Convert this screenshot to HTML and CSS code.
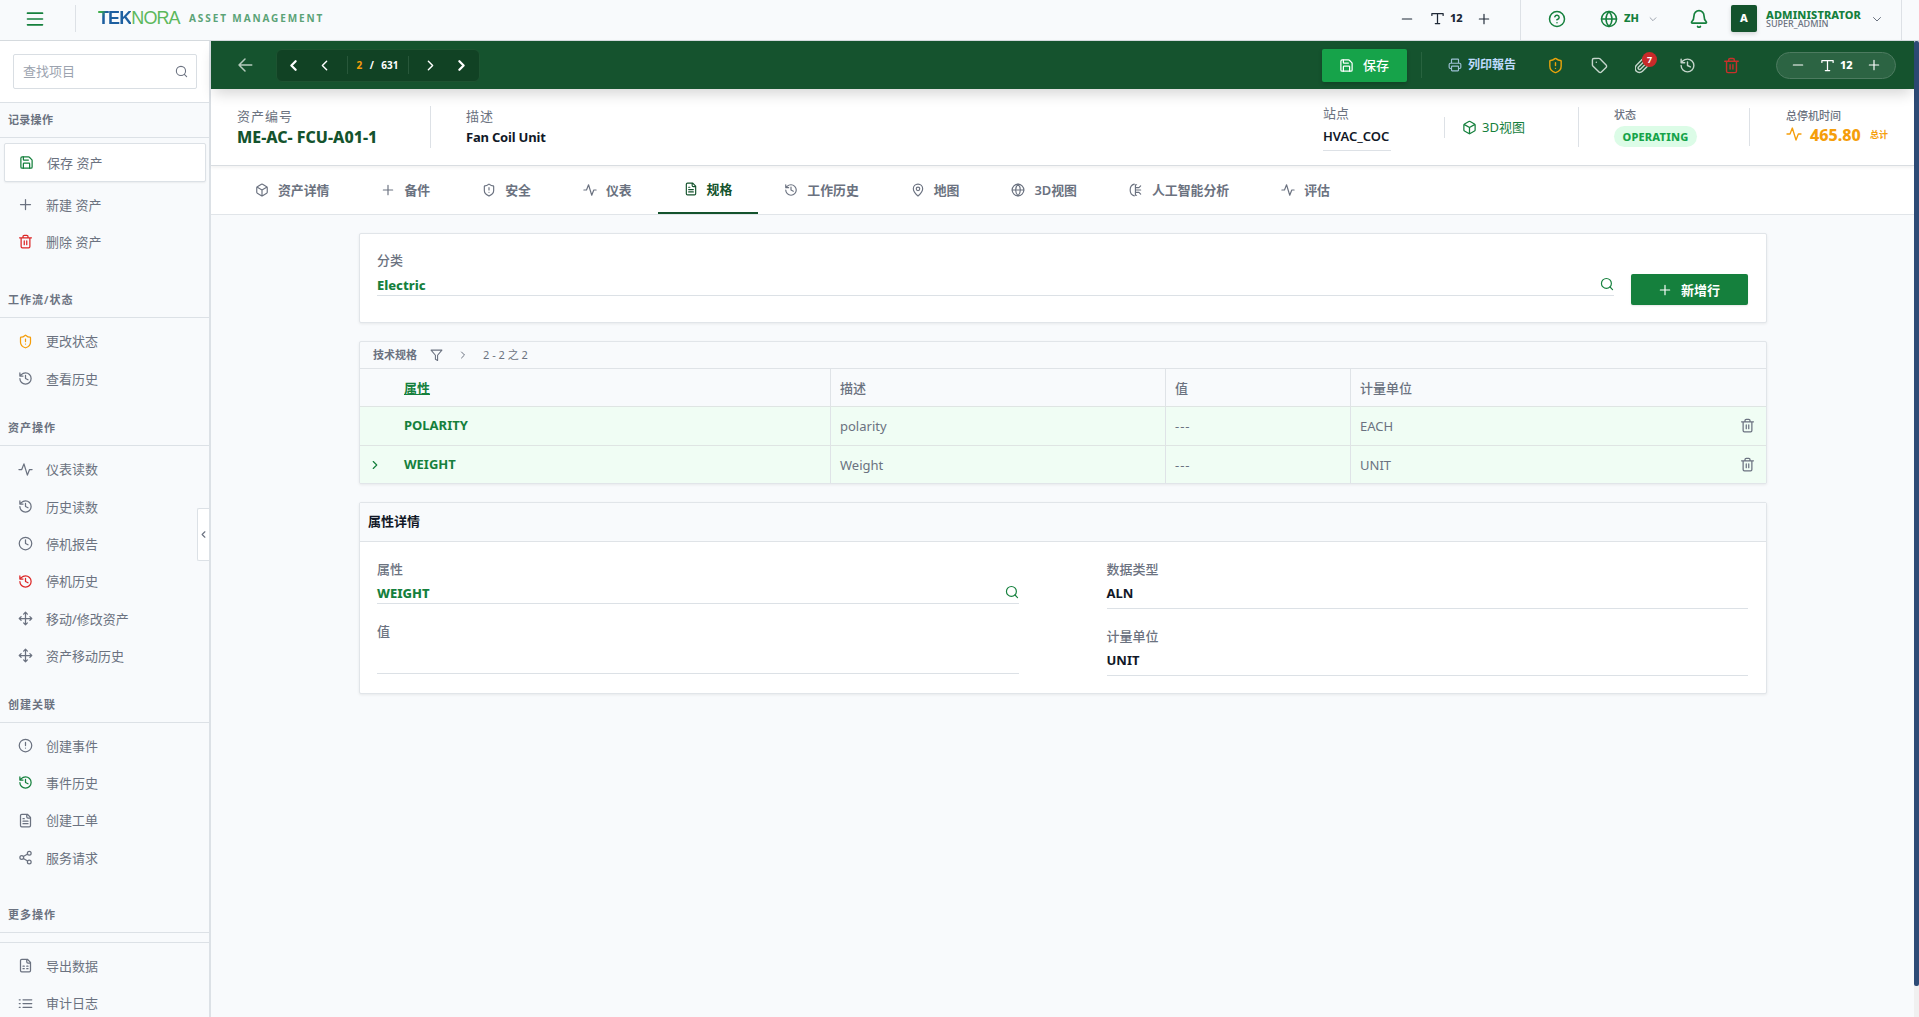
FILE: index.html
```html
<!DOCTYPE html>
<html lang="zh">
<head>
	<meta charset="utf-8">
	<title>Asset Management</title>
	<link rel="stylesheet" href="styles.css">
</head>
<body>
<svg class="defs" xmlns="http://www.w3.org/2000/svg">
	<symbol id="i-save" viewBox="0 0 24 24"><path d="M15.2 3a2 2 0 0 1 1.4.6l3.8 3.8a2 2 0 0 1 .6 1.4V19a2 2 0 0 1-2 2H5a2 2 0 0 1-2-2V5a2 2 0 0 1 2-2z"/><path d="M17 21v-7a1 1 0 0 0-1-1H8a1 1 0 0 0-1 1v7M7 3v4a1 1 0 0 0 1 1h7"/></symbol>
	<symbol id="i-plus" viewBox="0 0 24 24"><path d="M4 12h16M12 4v16"/></symbol>
	<symbol id="i-minus" viewBox="0 0 24 24"><path d="M4 12h16"/></symbol>
	<symbol id="i-trash" viewBox="0 0 24 24"><path d="M2.5 6h19M19 6v14a2 2 0 0 1-2 2H7a2 2 0 0 1-2-2V6M8 6V4a2 2 0 0 1 2-2h4a2 2 0 0 1 2 2v2M10 11v6M14 11v6"/></symbol>
	<symbol id="i-shield" viewBox="0 0 24 24"><path d="M20 13c0 5-3.5 7.5-7.7 9a1 1 0 0 1-.6 0C7.500 20.500 4 18 4 13V6a1 1 0 0 1 1-1c2 0 4.500-1.200 6.200-2.700a1.200 1.200 0 0 1 1.600 0C14.500 3.800 17 5 19 5a1 1 0 0 1 1 1zM12 8v4M12 16h.01"/></symbol>
	<symbol id="i-history" viewBox="0 0 24 24"><path d="M3 12a9 9 0 1 0 9-9 9.750 9.750 0 0 0-6.740 2.740L3 8M3 3v5h5M12 7v5l4 2"/></symbol>
	<symbol id="i-pulse" viewBox="0 0 24 24"><path d="M1.500 12H6l3.500-9L15 21l3.500-9h4"/></symbol>
	<symbol id="i-clock" viewBox="0 0 24 24"><circle cx="12" cy="12" r="10"/><path d="M12 6v6l4 2"/></symbol>
	<symbol id="i-move" viewBox="0 0 24 24"><path d="M12 2v20M2 12h20M15 19l-3 3-3-3M19 9l3 3-3 3M5 9l-3 3 3 3M9 5l3-3 3 3"/></symbol>
	<symbol id="i-alert" viewBox="0 0 24 24"><circle cx="12" cy="12" r="10"/><path d="M12 7v5M12 16h.01"/></symbol>
	<symbol id="i-file" viewBox="0 0 24 24"><path d="M15 2H6a2 2 0 0 0-2 2v16a2 2 0 0 0 2 2h12a2 2 0 0 0 2-2V7zM14 2v4a2 2 0 0 0 2 2h4M10 9H8M16 13H8M16 17H8"/></symbol>
	<symbol id="i-sheet" viewBox="0 0 24 24"><path d="M15 2H6a2 2 0 0 0-2 2v16a2 2 0 0 0 2 2h12a2 2 0 0 0 2-2V7zM14 2v4a2 2 0 0 0 2 2h4M8 13h2M14 13h2M8 17h2M14 17h2"/></symbol>
	<symbol id="i-share" viewBox="0 0 24 24"><circle cx="18" cy="5" r="3"/><circle cx="6" cy="12" r="3"/><circle cx="18" cy="19" r="3"/><path d="M8.600 13.500l6.800 4M15.400 6.500l-6.800 4"/></symbol>
	<symbol id="i-list" viewBox="0 0 24 24"><path d="M8 6h14M8 12h14M8 18h14M2 6h1.500M2 12h1.500M2 18h1.500"/></symbol>
	<symbol id="i-search" viewBox="0 0 24 24"><circle cx="11" cy="11" r="8.500"/><path d="M21.500 21.500l-4.300-4.300"/></symbol>
	<symbol id="i-menu" viewBox="0 0 24 24"><path d="M3 5h18M3 12h18M3 19h18"/></symbol>
	<symbol id="i-left" viewBox="0 0 24 24"><path d="M15 18l-6-6 6-6"/></symbol>
	<symbol id="i-right" viewBox="0 0 24 24"><path d="M9 18l6-6-6-6"/></symbol>
	<symbol id="i-down" viewBox="0 0 24 24"><path d="M5 9l7 7 7-7"/></symbol>
	<symbol id="i-back" viewBox="0 0 24 24"><path d="M12 20l-8-8 8-8M21 12H4"/></symbol>
	<symbol id="i-type" viewBox="0 0 24 24"><path d="M3 7V4h18v3M12 4v16M8.500 20h7"/></symbol>
	<symbol id="i-help" viewBox="0 0 24 24"><circle cx="12" cy="12" r="10"/><path d="M9.100 9a3 3 0 0 1 5.800 1c0 2-3 3-3 3M12 17h.01"/></symbol>
	<symbol id="i-globe" viewBox="0 0 24 24"><circle cx="12" cy="12" r="10"/><path d="M12 2a14.500 14.500 0 0 0 0 20 14.500 14.500 0 0 0 0-20M2 12h20"/></symbol>
	<symbol id="i-bell" viewBox="0 0 24 24"><path d="M10.300 21a2 2 0 0 0 3.400 0M3.300 15.300A1 1 0 0 0 4 17h16a1 1 0 0 0 .7-1.700C19.400 14 18 12.500 18 8A6 6 0 0 0 6 8c0 4.500-1.400 6-2.700 7.300z"/></symbol>
	<symbol id="i-print" viewBox="0 0 24 24"><path d="M6 18H4a2 2 0 0 1-2-2v-5a2 2 0 0 1 2-2h16a2 2 0 0 1 2 2v5a2 2 0 0 1-2 2h-2M6 9V3a1 1 0 0 1 1-1h10a1 1 0 0 1 1 1v6"/><rect x="6" y="14" width="12" height="8" rx="1"/></symbol>
	<symbol id="i-tag" viewBox="0 0 24 24"><path d="M12.600 2.600A2 2 0 0 0 11.200 2H4a2 2 0 0 0-2 2v7.200a2 2 0 0 0 .6 1.400l8.700 8.700a2.400 2.400 0 0 0 3.400 0l6.600-6.600a2.400 2.400 0 0 0 0-3.400zM7.500 7.500h.01"/></symbol>
	<symbol id="i-clip" viewBox="0 0 24 24"><path d="M13.200 6l-8.400 8.400a2 2 0 0 0 2.800 2.800L16 8.800a4 4 0 1 0-5.700-5.600l-8.300 8.500a6 6 0 1 0 8.500 8.500l8.400-8.500"/></symbol>
	<symbol id="i-cube" viewBox="0 0 24 24"><path d="M21 8a2 2 0 0 0-1-1.700l-7-4a2 2 0 0 0-2 0l-7 4A2 2 0 0 0 3 8v8a2 2 0 0 0 1 1.700l7 4a2 2 0 0 0 2 0l7-4a2 2 0 0 0 1-1.700zM3.300 7l8.700 5 8.700-5M12 22V12"/></symbol>
	<symbol id="i-pin" viewBox="0 0 24 24"><path d="M20 10c0 5-5.500 10.200-7.400 11.800a1 1 0 0 1-1.200 0C9.500 20.200 4 15 4 10a8 8 0 0 1 16 0z"/><circle cx="12" cy="10" r="3"/></symbol>
	<symbol id="i-brain" viewBox="0 0 24 24"><path d="M9 2C5 3 2 7 2 12s3 9 7 10M13 3h-2v18h2M11 8h6l3-3M11 12h9M11 16h6l3 3"/></symbol>
	<symbol id="i-filter" viewBox="0 0 24 24"><path d="M22 3H2l8 9.500V20l4 2v-9.500z"/></symbol>
</svg>

<header class="topbar">
	<svg class="icon menu"><use href="#i-menu"/></svg>
	<div class="brand">
		<span class="logo"><b>TEK</b><i>NORA</i></span>
		<span class="product">ASSET MANAGEMENT</span>
	</div>
	<div class="font-size">
		<svg class="icon"><use href="#i-minus"/></svg>
		<svg class="icon"><use href="#i-type"/></svg>
		<b>12</b>
		<svg class="icon"><use href="#i-plus"/></svg>
	</div>
	<div class="user-tools">
		<svg class="icon help"><use href="#i-help"/></svg>
		<svg class="icon globe"><use href="#i-globe"/></svg>
		<b class="lang">ZH</b>
		<svg class="icon caret"><use href="#i-down"/></svg>
		<svg class="icon bell"><use href="#i-bell"/></svg>
		<span class="avatar">A</span>
		<div class="user"><b>ADMINISTRATOR</b><span>SUPER_ADMIN</span></div>
		<svg class="icon user-caret"><use href="#i-down"/></svg>
	</div>
</header>

<div class="layout">
	<aside class="sidebar">
		<div class="search-wrap">
			<div class="search"><span>查找项目</span><svg class="icon"><use href="#i-search"/></svg></div>
		</div>
		<h3 class="first">记录操作</h3>
		<ul class="record">
			<li class="active"><svg class="icon green"><use href="#i-save"/></svg>保存 资产</li>
			<li><svg class="icon"><use href="#i-plus"/></svg>新建 资产</li>
			<li><svg class="icon red"><use href="#i-trash"/></svg>删除 资产</li>
		</ul>
		<h3>工作流/状态</h3>
		<ul>
			<li><svg class="icon orange"><use href="#i-shield"/></svg>更改状态</li>
			<li><svg class="icon"><use href="#i-history"/></svg>查看历史</li>
		</ul>
		<h3>资产操作</h3>
		<ul>
			<li><svg class="icon"><use href="#i-pulse"/></svg>仪表读数</li>
			<li><svg class="icon"><use href="#i-history"/></svg>历史读数</li>
			<li><svg class="icon"><use href="#i-clock"/></svg>停机报告</li>
			<li><svg class="icon red"><use href="#i-history"/></svg>停机历史</li>
			<li><svg class="icon"><use href="#i-move"/></svg>移动/修改资产</li>
			<li><svg class="icon"><use href="#i-move"/></svg>资产移动历史</li>
		</ul>
		<h3>创建关联</h3>
		<ul class="related">
			<li><svg class="icon"><use href="#i-alert"/></svg>创建事件</li>
			<li><svg class="icon green"><use href="#i-history"/></svg>事件历史</li>
			<li><svg class="icon"><use href="#i-file"/></svg>创建工单</li>
			<li><svg class="icon"><use href="#i-share"/></svg>服务请求</li>
		</ul>
		<h3>更多操作</h3>
		<ul class="more">
			<li><svg class="icon"><use href="#i-sheet"/></svg>导出数据</li>
			<li><svg class="icon"><use href="#i-list"/></svg>审计日志</li>
		</ul>
		<span class="collapse"><svg class="icon"><use href="#i-left"/></svg></span>
	</aside>

	<main class="main">
		<div class="actionbar">
			<svg class="icon back"><use href="#i-back"/></svg>
			<div class="pager">
				<svg class="icon bold"><use href="#i-left"/></svg>
				<svg class="icon"><use href="#i-left"/></svg>
				<div class="count"><em>2</em><span>/</span><span>631</span></div>
				<svg class="icon"><use href="#i-right"/></svg>
				<svg class="icon bold"><use href="#i-right"/></svg>
			</div>
			<button class="save"><svg class="icon"><use href="#i-save"/></svg>保存</button>
			<div class="print"><svg class="icon"><use href="#i-print"/></svg>列印報告</div>
			<div class="tools">
				<svg class="icon orange"><use href="#i-shield"/></svg>
				<svg class="icon"><use href="#i-tag"/></svg>
				<span class="attach"><svg class="icon"><use href="#i-clip"/></svg><b>7</b></span>
				<svg class="icon"><use href="#i-history"/></svg>
				<svg class="icon red"><use href="#i-trash"/></svg>
			</div>
			<div class="font-size light">
				<svg class="icon"><use href="#i-minus"/></svg>
				<svg class="icon"><use href="#i-type"/></svg>
				<b>12</b>
				<svg class="icon"><use href="#i-plus"/></svg>
			</div>
		</div>

		<section class="summary">
			<div class="asset-no"><label>资产编号</label><strong>ME-AC- FCU-A01-1</strong></div>
			<div class="asset-desc"><label>描述</label><strong>Fan Coil Unit</strong></div>
			<div class="site"><label>站点</label><strong>HVAC_COC</strong></div>
			<div class="view3d"><svg class="icon"><use href="#i-cube"/></svg>3D视图</div>
			<div class="status"><label>状态</label><span class="pill">OPERATING</span></div>
			<div class="downtime">
				<label>总停机时间</label>
				<div class="total"><svg class="icon"><use href="#i-pulse"/></svg><b>465.80</b><small>总计</small></div>
			</div>
		</section>

		<nav class="tabs">
			<a><svg class="icon"><use href="#i-cube"/></svg>资产详情</a>
			<a><svg class="icon"><use href="#i-plus"/></svg>备件</a>
			<a><svg class="icon"><use href="#i-shield"/></svg>安全</a>
			<a><svg class="icon"><use href="#i-pulse"/></svg>仪表</a>
			<a class="active"><svg class="icon"><use href="#i-file"/></svg>规格</a>
			<a><svg class="icon"><use href="#i-history"/></svg>工作历史</a>
			<a><svg class="icon"><use href="#i-pin"/></svg>地图</a>
			<a><svg class="icon"><use href="#i-globe"/></svg>3D视图</a>
			<a><svg class="icon"><use href="#i-brain"/></svg>人工智能分析</a>
			<a><svg class="icon"><use href="#i-pulse"/></svg>评估</a>
		</nav>

		<div class="content">
			<section class="card classify">
				<div class="field lookup">
					<label>分类</label>
					<div class="value"><strong>Electric</strong><svg class="icon"><use href="#i-search"/></svg></div>
				</div>
				<button class="add"><svg class="icon"><use href="#i-plus"/></svg>新增行</button>
			</section>

			<section class="card specs">
				<div class="specs-head">
					<b>技术规格</b>
					<svg class="icon filter"><use href="#i-filter"/></svg>
					<svg class="icon next"><use href="#i-right"/></svg>
					<span>2 - 2 之 2</span>
				</div>
				<div class="row head"><span></span><u>属性</u><span class="cell">描述</span><span class="cell">值</span><span class="cell">计量单位</span></div>
				<div class="row">
					<span></span><strong>POLARITY</strong><span class="cell">polarity</span><span class="cell none">---</span>
					<span class="cell last">EACH<svg class="icon"><use href="#i-trash"/></svg></span>
				</div>
				<div class="row">
					<span class="expand"><svg class="icon"><use href="#i-right"/></svg></span><strong>WEIGHT</strong><span class="cell">Weight</span><span class="cell none">---</span>
					<span class="cell last">UNIT<svg class="icon"><use href="#i-trash"/></svg></span>
				</div>
			</section>

			<section class="card detail">
				<h2>属性详情</h2>
				<div class="detail-body">
					<div class="col">
						<div class="field lookup">
							<label>属性</label>
							<div class="value"><strong>WEIGHT</strong><svg class="icon"><use href="#i-search"/></svg></div>
						</div>
						<div class="field empty"><label>值</label><div class="value"></div></div>
					</div>
					<div class="col">
						<div class="field"><label>数据类型</label><div class="value">ALN</div></div>
						<div class="field"><label>计量单位</label><div class="value">UNIT</div></div>
					</div>
				</div>
			</section>
		</div>
	</main>
	<div class="scroll"><span></span></div>
</div>
</body>
</html>
```
FILE: styles.css
```css
*{
	margin: 0;
	padding: 0;
	box-sizing: border-box;
}
body{
	height: 1017px;
	overflow: hidden;
	background: #f8fafc;
	color: #6b7280;
	font-family: "Noto Sans", "Noto Sans CJK SC", sans-serif;
	font-size: 13px;
	line-height: 18px;
}
.defs{
	position: absolute;
	width: 0;
	height: 0;
}
.icon{
	width: 14px;
	height: 14px;
	flex: none;
	display: block;
	fill: none;
	stroke: currentColor;
	stroke-width: 2;
	stroke-linecap: round;
	stroke-linejoin: round;
}
.green{ color: #15803d; }
.red{ color: #dc2626; }
.orange{ color: #f59e0b; }
button{
	border: 0;
	border-radius: 2px;
	font: inherit;
	font-weight: 700;
	color: #fff;
	display: flex;
	align-items: center;
}

/* 顶部栏 */
.topbar{
	height: 41px;
	padding-bottom: 3px;
	display: flex;
	align-items: center;
	border-bottom: 1px solid #d5dade;
}
.menu{
	width: 20px;
	height: 20px;
	margin-left: 25px;
	color: #15803d;
}
.brand{
	height: 27px;
	margin-left: 30px;
	padding-left: 22px;
	border-left: 1px solid #dde1e6;
	display: flex;
	align-items: center;
	flex: 1;
}
.logo{
	width: 82px;
	margin: -2px 9px 0 0;
	font-family: "Liberation Sans", sans-serif;
	font-size: 18px;
	letter-spacing: -.9px;
	color: #5cb85c;
}
.logo b{
	background: linear-gradient(125deg, #3fae49 12%, #1d5fa0 24%);
	-webkit-background-clip: text;
	color: transparent;
}
.logo i{ font-style: normal; }
.product{
	margin-top: -1px;
	font-size: 10px;
	font-weight: 700;
	letter-spacing: 1.900px;
	color: #5ba377;
}
.font-size{
	width: 120px;
	display: flex;
	align-items: center;
	color: #1f2937;
}
.font-size b{
	width: 12px;
	margin: -1px 0 0 5px;
	font-size: 11px;
	font-weight: 800;
}
.font-size .icon:nth-child(2){
	width: 15px;
	height: 15px;
	margin-left: 16px;
}
.font-size .icon:last-child{ margin-left: 15px; }
.user-tools{
	align-self: stretch;
	width: 382px;
	margin: 0 17px -3px 0;
	padding: 0 0 3px 27px;
	border-left: 1px solid #dde1e6;
	border-right: 1px solid #dde1e6;
	display: flex;
	align-items: center;
	color: #15803d;
}
.help, .globe, .bell{
	width: 18px;
	height: 18px;
}
.globe{ margin-left: 34px; }
.lang{
	width: 18px;
	margin: -1px 0 0 6px;
	font-size: 11px;
	font-weight: 800;
}
.caret{
	width: 10px;
	height: 10px;
	margin-left: 6px;
	color: #8b929e;
}
.bell{
	width: 20px;
	height: 20px;
	margin-left: 31px;
}
.avatar{
	width: 26px;
	height: 27px;
	margin-left: 22px;
	border-radius: 2px;
	background: #14532d;
	color: #fff;
	font-size: 11px;
	font-weight: 800;
	line-height: 26px;
	text-align: center;
	box-shadow: 0 2px 4px rgba(0,0,0,.15);
}
.user{
	width: 98px;
	margin-left: 9px;
	font-size: 11px;
	line-height: 9px;
}
.user b{
	display: block;
	font-weight: 800;
	letter-spacing: .1px;
}
.user span{
	display: block;
	font-size: 9px;
	font-weight: 500;
	color: #6b7280;
}
.user-caret{
	width: 12px;
	height: 12px;
	margin-left: 7px;
	color: #6b7280;
}

.layout{
	height: 976px;
	display: flex;
}

/* 左侧菜单 */
.sidebar{
	position: relative;
	width: 211px;
	border-right: 2px solid #dce1e6;
	flex: none;
	overflow: hidden;
}
.search-wrap{
	height: 61px;
	padding: 13px 12px 0 13px;
	background: #fff;
}
.search{
	height: 35px;
	padding: 0 8px 1px 9px;
	border: 1px solid #d9dee3;
	border-radius: 2px;
	display: flex;
	align-items: center;
	justify-content: space-between;
	color: #9ca3af;
}
.search .icon{
	width: 13px;
	height: 13px;
	color: #6b7280;
}
.sidebar h3{
	height: 35px;
	padding-left: 8px;
	border-bottom: 1px solid #dce1e6;
	font-size: 11px;
	font-weight: 600;
	letter-spacing: 1px;
	line-height: 34px;
}
.sidebar h3.first{
	height: 36px;
	border-top: 1px solid #dce1e6;
	letter-spacing: .3px;
}
.sidebar ul{
	padding: 5px 4px 13.500px;
	list-style: none;
}
.sidebar li{
	height: 37.300px;
	padding-left: 14px;
	display: flex;
	align-items: center;
	gap: 13px;
}
.sidebar li .icon{ width: 15px; height: 15px; }
.sidebar ul.record{ padding-bottom: 22px; }
.sidebar .record li.active{
	width: 202px;
	height: 39px;
	margin-bottom: 4px;
	border: 1px solid #dce1e6;
	border-radius: 2px;
	background: #fff;
	box-shadow: 0 1px 2px rgba(0,0,0,.06);
}
.sidebar ul.related{
	padding-top: 4px;
	padding-bottom: 22px;
}
.sidebar ul.more{
	margin-top: 9px;
	padding-top: 4px;
	border-top: 1px solid #dce1e6;
}
.collapse{
	position: absolute;
	top: 467px;
	right: 0;
	width: 12px;
	height: 53px;
	border: 1px solid #dce1e6;
	border-right: 0;
	border-radius: 2px 0 0 2px;
	background: #fff;
	display: flex;
	align-items: center;
}
.collapse .icon{ width: 11px; height: 11px; stroke-width: 2.500; }

/* 深绿操作栏 */
.main{
	flex: 1;
}
.actionbar{
	position: relative;
	z-index: 1;
	height: 48px;
	padding: 0 18px 0 25px;
	background: #15532e;
	box-shadow: 0 8px 14px -3px rgba(0,0,0,.16);
	display: flex;
	align-items: center;
}
.back{
	width: 18px;
	height: 18px;
	color: #b5cbbd;
}
.pager{
	width: 204px;
	height: 33px;
	margin: 0 auto 0 22px;
	padding: 0 9px 0 8px;
	border: 1px solid #1d5331;
	border-radius: 6px;
	background: #114224;
	color: #fff;
	display: flex;
	align-items: center;
	justify-content: space-between;
}
.pager .icon{ width: 17px; height: 17px; }
.pager .bold{ stroke-width: 3.200; }
.count{
	width: 62px;
	padding: 0 9px;
	border-left: 1px solid #28573a;
	border-right: 1px solid #28573a;
	display: flex;
	justify-content: space-between;
	font-size: 10px;
	font-weight: 700;
}
.count em{
	font-style: normal;
	color: #f59e0b;
}
.save{
	width: 85px;
	height: 33px;
	padding-left: 17px;
	gap: 9px;
	background: #16a34a;
	box-shadow: 0 2px 4px rgba(0,0,0,.2);
	font-weight: 500;
}
.save .icon{ width: 15px; height: 15px; }
.print{
	width: 122px;
	height: 26px;
	margin-left: 14px;
	padding-left: 26px;
	border-left: 1px solid #28633f;
	display: flex;
	align-items: center;
	gap: 6px;
	font-size: 12px;
	font-weight: 700;
	color: #bfdbfe;
}
.print .icon{ opacity: .8; }
.tools{
	width: 193px;
	margin: 0 36px 0 4px;
	display: flex;
	justify-content: space-between;
	color: #c5d5cb;
}
.tools .icon{ width: 17px; height: 17px; }
.tools .orange{ color: #e9a30c; }
.tools .red{ color: #c9302a; }
.attach{ position: relative; }
.attach b{
	position: absolute;
	top: -5px;
	right: -5px;
	width: 15px;
	height: 15px;
	border-radius: 50%;
	background: #c92a2a;
	color: #fff;
	font-size: 9px;
	line-height: 15px;
	text-align: center;
}
.font-size.light{
	height: 27px;
	padding-left: 14px;
	border: 1px solid #4d7b60;
	border-radius: 14px;
	background: #2c6443;
	color: #fff;
}
.font-size.light .icon:nth-child(2){ margin-left: 15px; }

/* 资产摘要 */
.summary{
	height: 77px;
	padding-left: 26px;
	border-bottom: 1px solid #d9dde1;
	background: #fff;
	display: flex;
	align-items: center;
	box-shadow: 0 2px 3px rgba(0,0,0,.05);
	position: relative;
}
.summary label, .summary strong{ display: block; }
.asset-no{
	width: 194px;
	height: 42px;
	border-right: 1px solid #dde1e6;
}
.asset-no label, .asset-desc label{ letter-spacing: 1px; line-height: 20px; }
.asset-no strong{
	font-size: 16px;
	font-weight: 800;
	line-height: 23px;
	color: #14532d;
}
.asset-desc{
	height: 42px;
	margin: 0 auto 0 35px;
}
.asset-desc strong{
	letter-spacing: -.2px;
	line-height: 22px;
	color: #111827;
}
.site{
	width: 68px;
	margin-right: 53px;
}
.site strong{
	margin-top: 4px;
	padding: 1px 0 5px;
	border-bottom: 1px solid #dde1e6;
	font-weight: 600;
	color: #111827;
}
.view3d{
	width: 134px;
	height: 21px;
	padding-left: 17px;
	border-left: 1px solid #dde1e6;
	display: flex;
	align-items: center;
	gap: 5px;
	color: #15803d;
}
.view3d .icon{ width: 15px; height: 15px; }
.status{
	width: 171px;
	height: 40px;
	padding-left: 35px;
	border-left: 1px solid #dde1e6;
	font-size: 11px;
	font-weight: 500;
}
.status label{
	margin-bottom: 4px;
	line-height: 15px;
}
.pill{
	display: block;
	width: 83px;
	border-radius: 11px;
	background: #dcfce7;
	color: #16a34a;
	font-weight: 800;
	letter-spacing: .2px;
	line-height: 21px;
	text-align: center;
}
.downtime{
	width: 165px;
	height: 38px;
	padding-left: 36px;
	border-left: 1px solid #dde1e6;
	font-size: 11px;
	font-weight: 500;
}
.downtime label{ line-height: 16px; }
.total{
	padding-top: 2px;
	display: flex;
	align-items: center;
	color: #f59e0b;
}
.total .icon{ width: 16px; height: 16px; margin-top: -2px; }
.total b{
	width: 60px;
	margin-left: 8px;
	font-size: 16px;
	font-weight: 800;
}
.total small{ font-size: 9px; font-weight: 600; }

/* 页签 */
.tabs{
	height: 49px;
	padding-left: 18px;
	border-bottom: 1px solid #e1e5e9;
	background: #fff;
	display: flex;
}
.tabs a{
	padding: 0 26px;
	display: flex;
	align-items: center;
	gap: 9px;
	font-size: 12.870px;
	font-weight: 600;
}
.tabs .active{
	height: 48px;
	border-bottom: 2px solid #14532d;
	color: #14532d;
}

/* 内容 */
.content{
	width: 1408px;
	margin: 18px 0 0 148px;
	display: flex;
	flex-direction: column;
	gap: 18px;
}
.card{
	border: 1px solid #e1e5e9;
	border-radius: 2px;
	background: #fff;
	box-shadow: 0 1px 3px rgba(0,0,0,.07);
}
.classify{
	height: 90px;
	padding: 17px 18px 0 17px;
	display: flex;
	gap: 17px;
}
.field label{
	display: block;
	line-height: 18px;
	font-weight: 500;
}
.field .value{
	height: 31px;
	border-bottom: 1px solid #dce1e6;
	color: #111827;
	font-weight: 700;
	line-height: 31px;
}
.classify .field{ flex: 1; }
.field.lookup .value{
	height: 26px;
	padding-top: 4px;
	display: flex;
	align-items: center;
	justify-content: space-between;
	line-height: 18px;
	color: #15803d;
}
.lookup strong{ font-weight: 800; }
.lookup .icon{ margin-top: -2px; }
.classify .field.lookup .value{
	height: 27px;
	padding-top: 5px;
}
.add{
	width: 117px;
	height: 31px;
	margin-top: 23px;
	padding-left: 27px;
	gap: 9px;
	background: #15803d;
	box-shadow: 0 1px 2px rgba(0,0,0,.1);
}
.specs{
	height: 143px;
	background: #f8fafc;
	overflow: hidden;
}
.specs-head{
	height: 27px;
	padding-left: 13px;
	border-bottom: 1px solid #dfe3e7;
	display: flex;
	align-items: center;
	font-size: 11px;
}
.filter{ margin-left: 13px; width: 13px; }
.next{ width: 12px; height: 12px; }
.specs-head .next{ margin: 0 14px; }
.row{
	height: 37px;
	display: grid;
	grid-template-columns: 44px 426px 335px 185px 1fr;
	align-items: center;
	background: #f0fdf4;
	color: #6b7280;
}
.row + .row{ border-top: 1px solid #dfe5e3; height: 39px; }
.row.head{
	background: none;
	font-weight: 500;
}
.row u, .row strong{ color: #15803d; font-weight: 700; }
.row strong{ margin-top: -2px; }
.cell{
	height: 100%;
	padding-left: 9px;
	border-left: 1px solid #dfe3e7;
	display: flex;
	align-items: center;
}
.cell.none{ letter-spacing: 1px; }
.last{
	justify-content: space-between;
	padding-right: 11px;
}
.last .icon{ width: 15px; height: 15px; margin-top: -2px; }
.expand{ padding-left: 8px; color: #15803d; }
.detail{ height: 192px; }
.detail h2{
	height: 39px;
	padding-left: 8px;
	border-bottom: 1px solid #dfe3e7;
	background: #f8fafc;
	font-size: 13px;
	line-height: 37px;
	color: #111827;
}
.detail-body{
	padding: 18px 18px 0 17px;
	display: flex;
	gap: 88px;
}
.col{
	flex: 1;
	display: flex;
	flex-direction: column;
	gap: 18px;
}
.detail .empty .value{ height: 34px; }

/* 滚动条 */
.scroll{
	width: 5px;
	background: #f0f0f0;
}
.scroll span{
	display: block;
	height: 945px;
	border-radius: 2px;
	background: #2d4b76;
}
```
